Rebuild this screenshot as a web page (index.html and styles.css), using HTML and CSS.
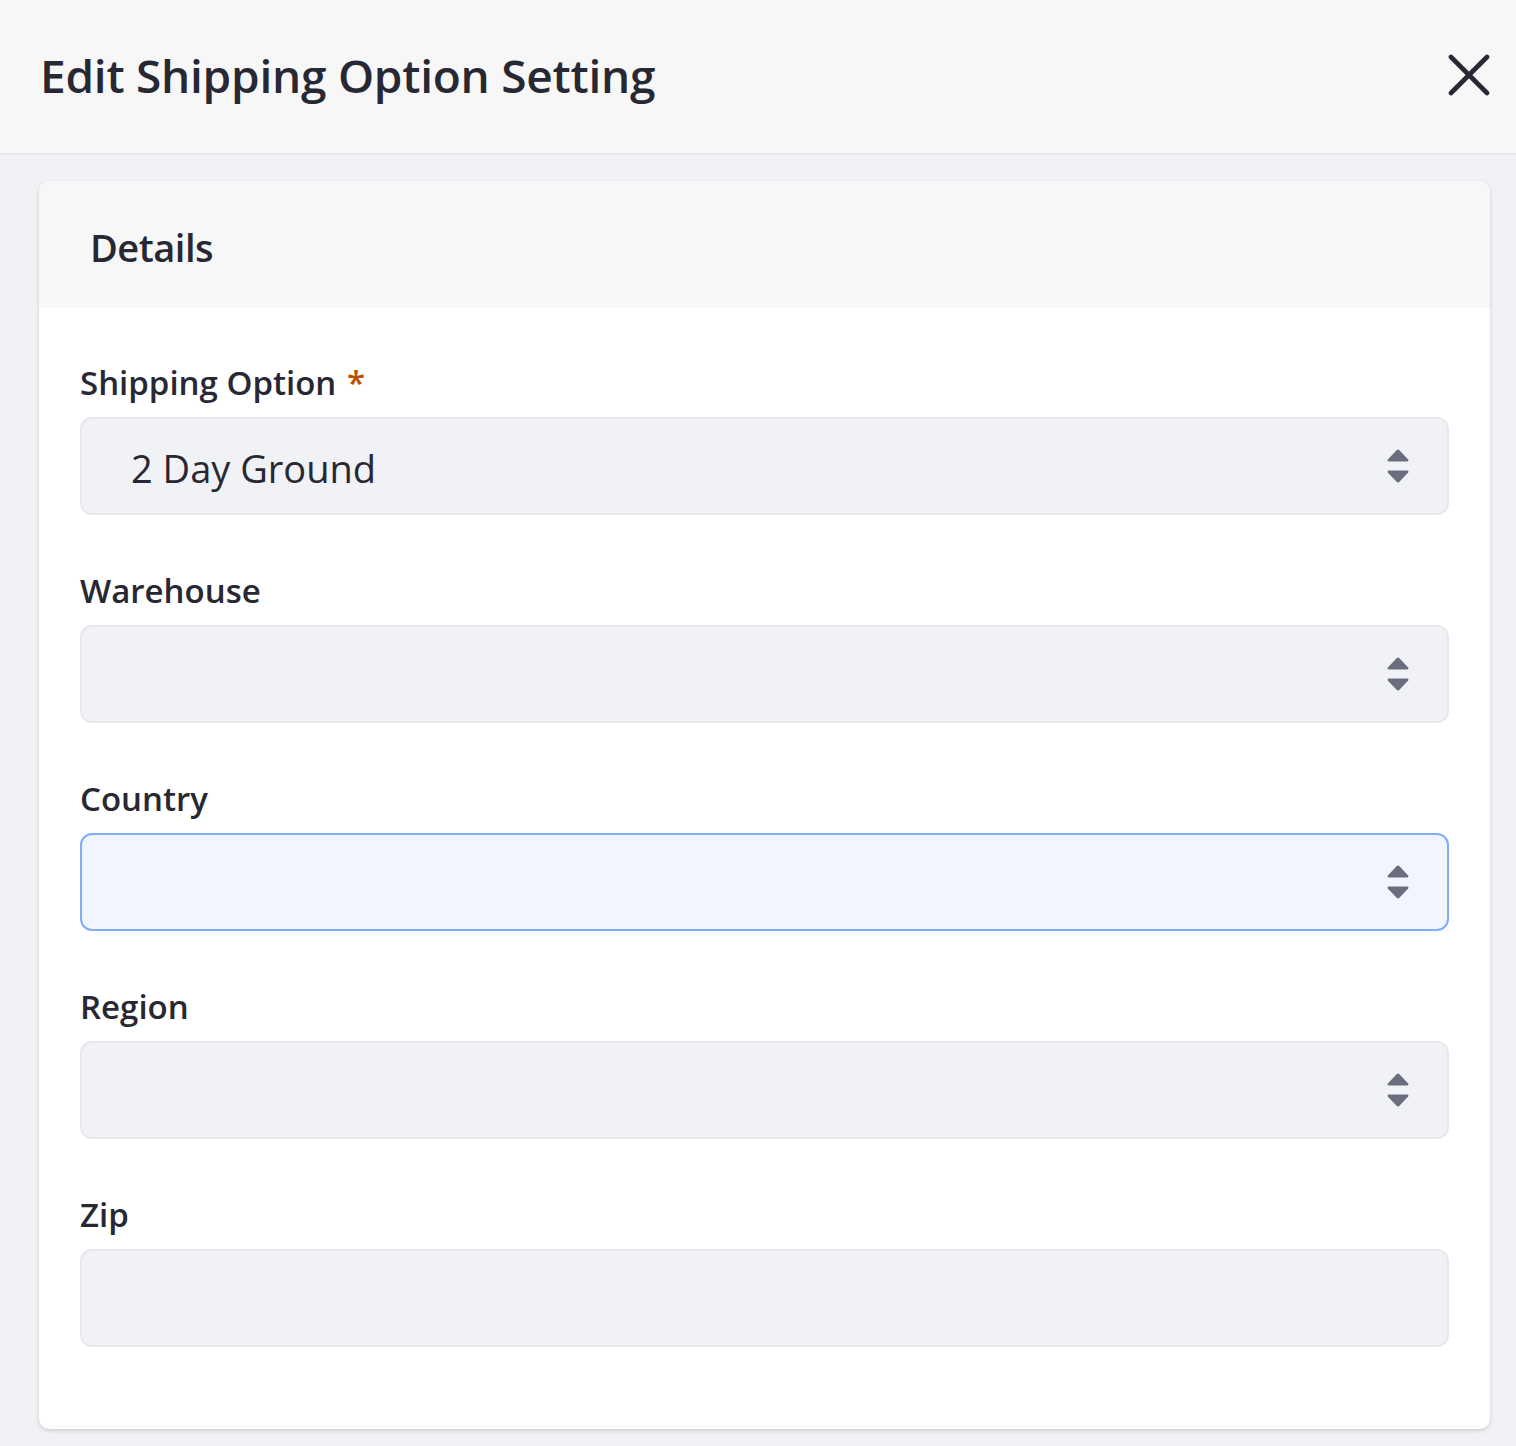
FILE: index.html
```html
<!DOCTYPE html>
<html lang="en">
<head>
<meta charset="utf-8">
<title>Edit Shipping Option Setting</title>
<link rel="stylesheet" href="styles.css">
</head>
<body>
<header class="panel-header">
  <h1 class="panel-title">Edit Shipping Option Setting</h1>
  <button class="close-btn" type="button" aria-label="Close">
    <svg width="42" height="42" viewBox="0 0 42 42"><path d="M3 3 L39 39 M39 3 L3 39" stroke="#272833" stroke-width="4.6" stroke-linecap="round" fill="none"/></svg>
  </button>
</header>
<main class="panel-body">
  <section class="card">
    <div class="card-header"><h2 class="card-title">Details</h2></div>
    <div class="card-body">
      <div class="form-group">
        <label class="form-label">Shipping Option <span class="req">*</span></label>
        <div class="select">
          <span class="select-value">2 Day Ground</span>
          <svg class="caret" width="22" height="34" viewBox="0 0 22 34"><path d="M9.6 1.2 Q11 -0.2 12.4 1.2 L21.2 10.6 Q22 12.5 20 12.5 L2 12.5 Q0 12.5 0.8 10.6 Z" fill="#6b6c7e"/><path d="M9.6 32.8 Q11 34.2 12.4 32.8 L21.2 23.4 Q22 21.5 20 21.5 L2 21.5 Q0 21.5 0.8 23.4 Z" fill="#6b6c7e"/></svg>
        </div>
      </div>
      <div class="form-group">
        <label class="form-label">Warehouse</label>
        <div class="select">
          <span class="select-value"></span>
          <svg class="caret" width="22" height="34" viewBox="0 0 22 34"><path d="M9.6 1.2 Q11 -0.2 12.4 1.2 L21.2 10.6 Q22 12.5 20 12.5 L2 12.5 Q0 12.5 0.8 10.6 Z" fill="#6b6c7e"/><path d="M9.6 32.8 Q11 34.2 12.4 32.8 L21.2 23.4 Q22 21.5 20 21.5 L2 21.5 Q0 21.5 0.8 23.4 Z" fill="#6b6c7e"/></svg>
        </div>
      </div>
      <div class="form-group">
        <label class="form-label">Country</label>
        <div class="select focused">
          <span class="select-value"></span>
          <svg class="caret" width="22" height="34" viewBox="0 0 22 34"><path d="M9.6 1.2 Q11 -0.2 12.4 1.2 L21.2 10.6 Q22 12.5 20 12.5 L2 12.5 Q0 12.5 0.8 10.6 Z" fill="#6b6c7e"/><path d="M9.6 32.8 Q11 34.2 12.4 32.8 L21.2 23.4 Q22 21.5 20 21.5 L2 21.5 Q0 21.5 0.8 23.4 Z" fill="#6b6c7e"/></svg>
        </div>
      </div>
      <div class="form-group">
        <label class="form-label">Region</label>
        <div class="select">
          <span class="select-value"></span>
          <svg class="caret" width="22" height="34" viewBox="0 0 22 34"><path d="M9.6 1.2 Q11 -0.2 12.4 1.2 L21.2 10.6 Q22 12.5 20 12.5 L2 12.5 Q0 12.5 0.8 10.6 Z" fill="#6b6c7e"/><path d="M9.6 32.8 Q11 34.2 12.4 32.8 L21.2 23.4 Q22 21.5 20 21.5 L2 21.5 Q0 21.5 0.8 23.4 Z" fill="#6b6c7e"/></svg>
        </div>
      </div>
      <div class="form-group last">
        <label class="form-label">Zip</label>
        <div class="select"></div>
      </div>
    </div>
  </section>
</main>
</body>
</html>
```
FILE: styles.css
```css
* { box-sizing: border-box; }
html, body { margin: 0; padding: 0; }
body {
  background: #f1f2f5;
  font-family: "Open Sans", "Noto Sans", sans-serif;
  color: #272833;
  height: 1446px;
  overflow: hidden;
}
.panel-header {
  height: 155px;
  background: #f7f7f8;
  border-bottom: 2px solid #e7e7ed;
  display: flex;
  align-items: center;
  justify-content: space-between;
  padding: 0 26px 0 40px;
}
.panel-title {
  margin: 0;
  font-size: 46px;
  font-weight: 600;
  line-height: 1;
  letter-spacing: -0.25px;
  position: relative;
  top: -2px;
}
.close-btn {
  border: 0;
  background: transparent;
  padding: 0;
  width: 42px;
  height: 42px;
  display: flex;
  position: relative;
  top: -2px;
}
.panel-body {
  padding: 26px 26px 0 39px;
}
.card {
  background: #fff;
  border-radius: 10px;
  box-shadow: 0 2px 4px rgba(0, 0, 0, 0.14), 0 0 1px rgba(0,0,0,0.08);
  overflow: hidden;
}
.card-header {
  height: 127px;
  background: #f7f7f8;
  display: flex;
  align-items: center;
  padding-left: 51px;
}
.card-title {
  margin: 0;
  font-size: 38px;
  font-weight: 600;
  line-height: 1;
  letter-spacing: -0.5px;
  position: relative;
  top: 2px;
}
.card-body {
  padding: 55px 41px 26px 41px;
}
.form-group { margin-bottom: 56px; }
.form-group.last { margin-bottom: 56px; }
.form-label {
  display: block;
  font-size: 33px;
  font-weight: 600;
  line-height: 40px;
  letter-spacing: 0;
  margin-bottom: 14px;
}
.req { color: #b95000; margin-left: 2px; }
.select {
  height: 98px;
  border: 2px solid #e7e7ed;
  border-radius: 12px;
  background: #f1f2f5;
  display: flex;
  align-items: center;
  justify-content: space-between;
  padding: 0 38px 0 49px;
}
.select.focused {
  border-color: #80acff;
  background: #f0f5ff;
}
.select-value {
  font-size: 38px;
  line-height: 1;
  letter-spacing: 0;
  position: relative;
  top: 2px;
}
.caret { display: block; }
```
